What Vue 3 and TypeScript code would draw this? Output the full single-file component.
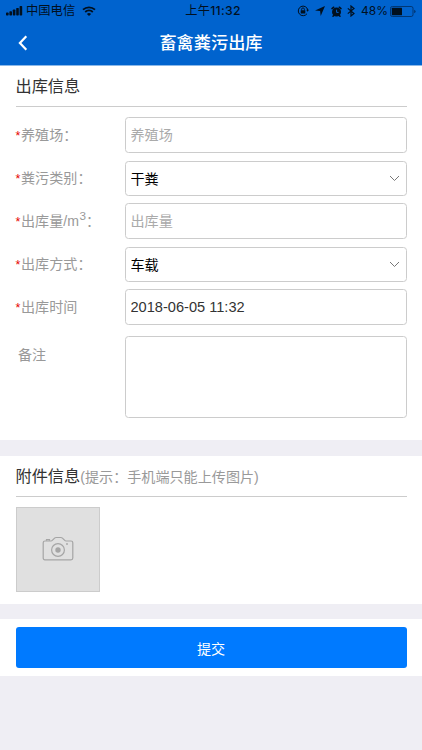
<script setup lang="ts">
import { ref } from 'vue'

interface Field {
  key: string
  label: string
  unitPower?: string
  kind: 'input' | 'select'
  placeholder?: string
  value: string
  options?: string[]
  colon: boolean
}

const fields = ref<Field[]>([
  { key: 'farm', label: '养殖场', kind: 'input', placeholder: '养殖场', value: '', colon: true },
  { key: 'type', label: '粪污类别', kind: 'select', value: '干粪', options: ['干粪'], colon: true },
  { key: 'amount', label: '出库量/m', unitPower: '3', kind: 'input', placeholder: '出库量', value: '', colon: true },
  { key: 'mode', label: '出库方式', kind: 'select', value: '车载', options: ['车载'], colon: true },
  { key: 'time', label: '出库时间', kind: 'input', value: '2018-06-05 11:32', colon: false },
])
const remark = ref('')
</script>

<template>
  <div class="page">
    <header class="header">
      <div class="status">
        <div class="status-left">
          <svg class="signal" width="17" height="10" viewBox="0 0 17 10">
            <rect x="0" y="6.5" width="2.6" height="3" rx=".7" />
            <rect x="3.4" y="5.2" width="2.6" height="4.3" rx=".7" />
            <rect x="6.8" y="3.6" width="2.6" height="5.9" rx=".7" />
            <rect x="10.2" y="1.9" width="2.6" height="7.6" rx=".7" />
            <rect x="13.6" y="0" width="2.6" height="9.5" rx=".7" />
          </svg>
          <span class="carrier">中国电信</span>
          <svg class="wifi" width="14" height="10" viewBox="0 0 14 10">
            <path d="M1 3.7a8.8 8.8 0 0 1 12 0M3.2 6a5.6 5.6 0 0 1 7.6 0" fill="none" stroke="currentColor" stroke-width="1.8" />
            <path d="M7 10L4.9 7.9a3.1 3.1 0 0 1 4.2 0z" />
          </svg>
        </div>
        <span class="clock">上午<b>11:32</b></span>
        <div class="status-right">
          <svg width="12" height="12" viewBox="0 0 12 12">
            <path d="M10 8.7A4.8 4.8 0 1 1 10.8 5" fill="none" stroke="currentColor" stroke-width="1" />
            <path d="M9.2 4.7h2.8l-1.4 2z" />
            <rect x="3.7" y="5.2" width="4.6" height="3.4" rx=".4" />
            <path d="M4.6 5.4V4.3a1.4 1.4 0 0 1 2.8 0v1.1" fill="none" stroke="currentColor" stroke-width=".9" />
          </svg>
          <svg class="arrow" width="10" height="10" viewBox="0 0 10 10"><path d="M10 0L5.7 10L5.1 4.9L0 4.4z" /></svg>
          <svg class="alarm" width="11" height="11" viewBox="0 0 11 11">
            <circle cx="5.5" cy="6" r="4.5" />
            <path d="M1 2.6L2.7 1.2M10 2.6L8.3 1.2M2.7 9.5l-.7.8M8.3 9.5l.7.8" stroke="currentColor" stroke-width="1.5" stroke-linecap="round" />
            <path d="M5.6 3.7v2.7H7.6" fill="none" stroke="#0063ce" stroke-width="1" />
          </svg>
          <svg class="bluetooth" width="8" height="12" viewBox="0 0 8 12"><path d="M.8 3.4L7 8.5 4 11V1L7 3.5.8 8.6" fill="none" stroke="currentColor" stroke-width="1.2" /></svg>
          <span class="percent">48%</span>
          <svg class="battery" width="27" height="11" viewBox="0 0 27 11">
            <rect x=".5" y=".5" width="22.5" height="10" rx="1.8" fill="none" stroke="#00326a" stroke-width=".9" />
            <rect x="1.8" y="1.8" width="10.2" height="7.4" rx=".5" />
            <path d="M24.2 3.7q1.4.5 1.4 1.8t-1.4 1.8z" fill="#00326a" />
          </svg>
        </div>
      </div>
      <nav class="nav">
        <svg class="back" width="10" height="16" viewBox="0 0 10 16"><path d="M8.3 1.2L1.9 8l6.4 6.8" fill="none" stroke="#fff" stroke-width="2.2" /></svg>
        <h1>畜禽粪污出库</h1>
      </nav>
    </header>

    <section class="card info">
      <h2>出库信息</h2>
      <div class="fields">
        <template v-for="f in fields" :key="f.key">
          <label class="label" :for="f.key"><i>*</i>{{ f.label }}<sup v-if="f.unitPower">{{ f.unitPower }}</sup><template v-if="f.colon">：</template></label>
          <div v-if="f.kind === 'select'" class="select-wrap">
            <select :id="f.key" v-model="f.value" class="control">
              <option v-for="o in f.options" :key="o">{{ o }}</option>
            </select>
            <svg class="chevron" width="11" height="7" viewBox="0 0 11 7"><path d="M1 1l4.5 4.5L10 1" fill="none" stroke="#777" stroke-width="1" /></svg>
          </div>
          <input v-else :id="f.key" v-model="f.value" class="control" :placeholder="f.placeholder" />
        </template>
        <label class="label remark-label" for="remark">备注</label>
        <textarea id="remark" v-model="remark" class="control remark"></textarea>
      </div>
    </section>

    <section class="card attach">
      <h2>附件信息<small>(提示：手机端只能上传图片)</small></h2>
      <div class="upload">
        <svg width="32" height="26" viewBox="0 0 32 26" fill="none" stroke="#a5a5a5" stroke-width="1.2">
          <path d="M3 5h6.2c1.7 0 2.6-3.5 4.8-3.5h5c2.2 0 3.1 3.5 4.8 3.5H29q1.8 0 1.8 1.8V22q0 1.8-1.8 1.8H3Q1.2 23.8 1.2 22V6.8Q1.2 5 3 5z" />
          <path d="M4.5 4.7V3.6h3v1.1" />
          <circle cx="16" cy="14" r="6.4" />
          <circle cx="16" cy="14" r="2.7" fill="#a5a5a5" stroke="none" />
          <circle cx="25" cy="8" r=".9" fill="#a5a5a5" stroke="none" />
        </svg>
      </div>
    </section>

    <div class="card submit-bar">
      <button type="button" class="submit">提交</button>
    </div>
  </div>
</template>

<style>
body {
  background: #efeef4;
}
</style>

<style scoped>
.page {
  width: 100%;
  min-height: 750px;
  box-sizing: border-box;
  background: #efeef4;
  color: #333;
  font-family: "Liberation Sans", "Noto Sans CJK SC", sans-serif;
}
.page * {
  box-sizing: border-box;
}
.header {
  height: 66px;
  background: #0063ce;
  border-bottom: 1px solid #8bb8e8;
}
.status {
  display: grid;
  grid-template-columns: 1fr auto 1fr;
  align-items: center;
  height: 22px;
  padding: 0 5px 0 6px;
  font-size: 12.3px;
  line-height: 22px;
  color: #00101f;
}
.status svg {
  display: block;
  flex: none;
  fill: currentColor;
}
.status-left,
.status-right {
  display: flex;
  align-items: center;
}
.status-right {
  justify-content: flex-end;
}
.carrier {
  margin-left: 3px;
}
.wifi {
  margin-left: 7px;
}
.clock {
  padding-left: 3px;
  font-family: Inter, "Noto Sans CJK SC", sans-serif;
  font-size: 12.2px;
  letter-spacing: 0.3px;
}
.clock b {
  font-weight: 500;
}
.arrow {
  margin-left: 6px;
}
.alarm {
  margin-left: 6px;
}
.bluetooth {
  margin-left: 5px;
}
.percent {
  width: 27px;
  margin-left: 6px;
  font-family: Inter, sans-serif;
  font-size: 12px;
}
.battery {
  margin-left: 2px;
}
.nav {
  display: grid;
  grid-template-columns: 30px 1fr 30px;
  align-items: center;
  height: 42px;
}
.back {
  margin: 0 0 2px 18px;
}
h1 {
  margin: 0;
  font-size: 17.2px;
  line-height: 43px;
  font-weight: 500;
  text-align: center;
  color: #fff;
}
.card {
  padding: 0 15.5px;
  background: #fff;
}
h2 {
  height: 41px;
  margin: 0;
  border-bottom: 1px solid #ccc;
  font-size: 16.2px;
  line-height: 41px;
  font-weight: 400;
  white-space: nowrap;
}
small {
  font-size: 14.1px;
  color: #999;
}
.info {
  height: 374px;
}
.fields {
  display: grid;
  grid-template-columns: 109px 1fr;
  grid-template-rows: 36px 36px 36px 36px 36px 82px;
  row-gap: 7px;
  padding-top: 10px;
}
.label {
  font-size: 14.1px;
  line-height: 37px;
  color: #999;
  white-space: nowrap;
}
.label i {
  display: inline-block;
  width: 5.5px;
  font-size: 12.5px;
  line-height: 20px;
  font-style: normal;
  color: #e60000;
}
.label sup {
  margin-left: 0.5px;
  font-size: 11.7px;
  line-height: 0;
}
.control {
  display: block;
  width: 100%;
  height: 36px;
  margin: 0;
  padding: 0 5px;
  border: 1px solid #ccc;
  border-radius: 3.5px;
  outline: none;
  background: #fff;
  color: #333;
  font-family: inherit;
  font-size: 14.6px;
  resize: none;
  appearance: none;
}
.control::placeholder {
  color: #aaa;
  font-size: 14.1px;
  opacity: 1;
}
.select-wrap {
  position: relative;
  padding-top: 1px;
}
.select-wrap .control {
  height: 35px;
  font-size: 14.1px;
  color: #000;
}
.chevron {
  position: absolute;
  right: 7px;
  top: 15px;
}
.remark-label {
  margin-top: 5px;
  padding-left: 2.5px;
}
.remark {
  height: 82px;
  margin-top: 4px;
}
.attach {
  height: 148px;
  margin-top: 16px;
}
.upload {
  display: flex;
  align-items: center;
  justify-content: center;
  width: 84.5px;
  height: 85px;
  padding-bottom: 2px;
  margin-top: 10px;
  border: 1px solid #ccc;
  background: #e0e0e0;
}
.submit-bar {
  height: 57px;
  margin-top: 15px;
  padding-top: 8px;
}
.submit {
  display: block;
  width: 100%;
  height: 41px;
  padding: 0;
  border: 0;
  border-radius: 3px;
  background: #007aff;
  color: #fff;
  font-family: inherit;
  font-size: 14.1px;
}
</style>
